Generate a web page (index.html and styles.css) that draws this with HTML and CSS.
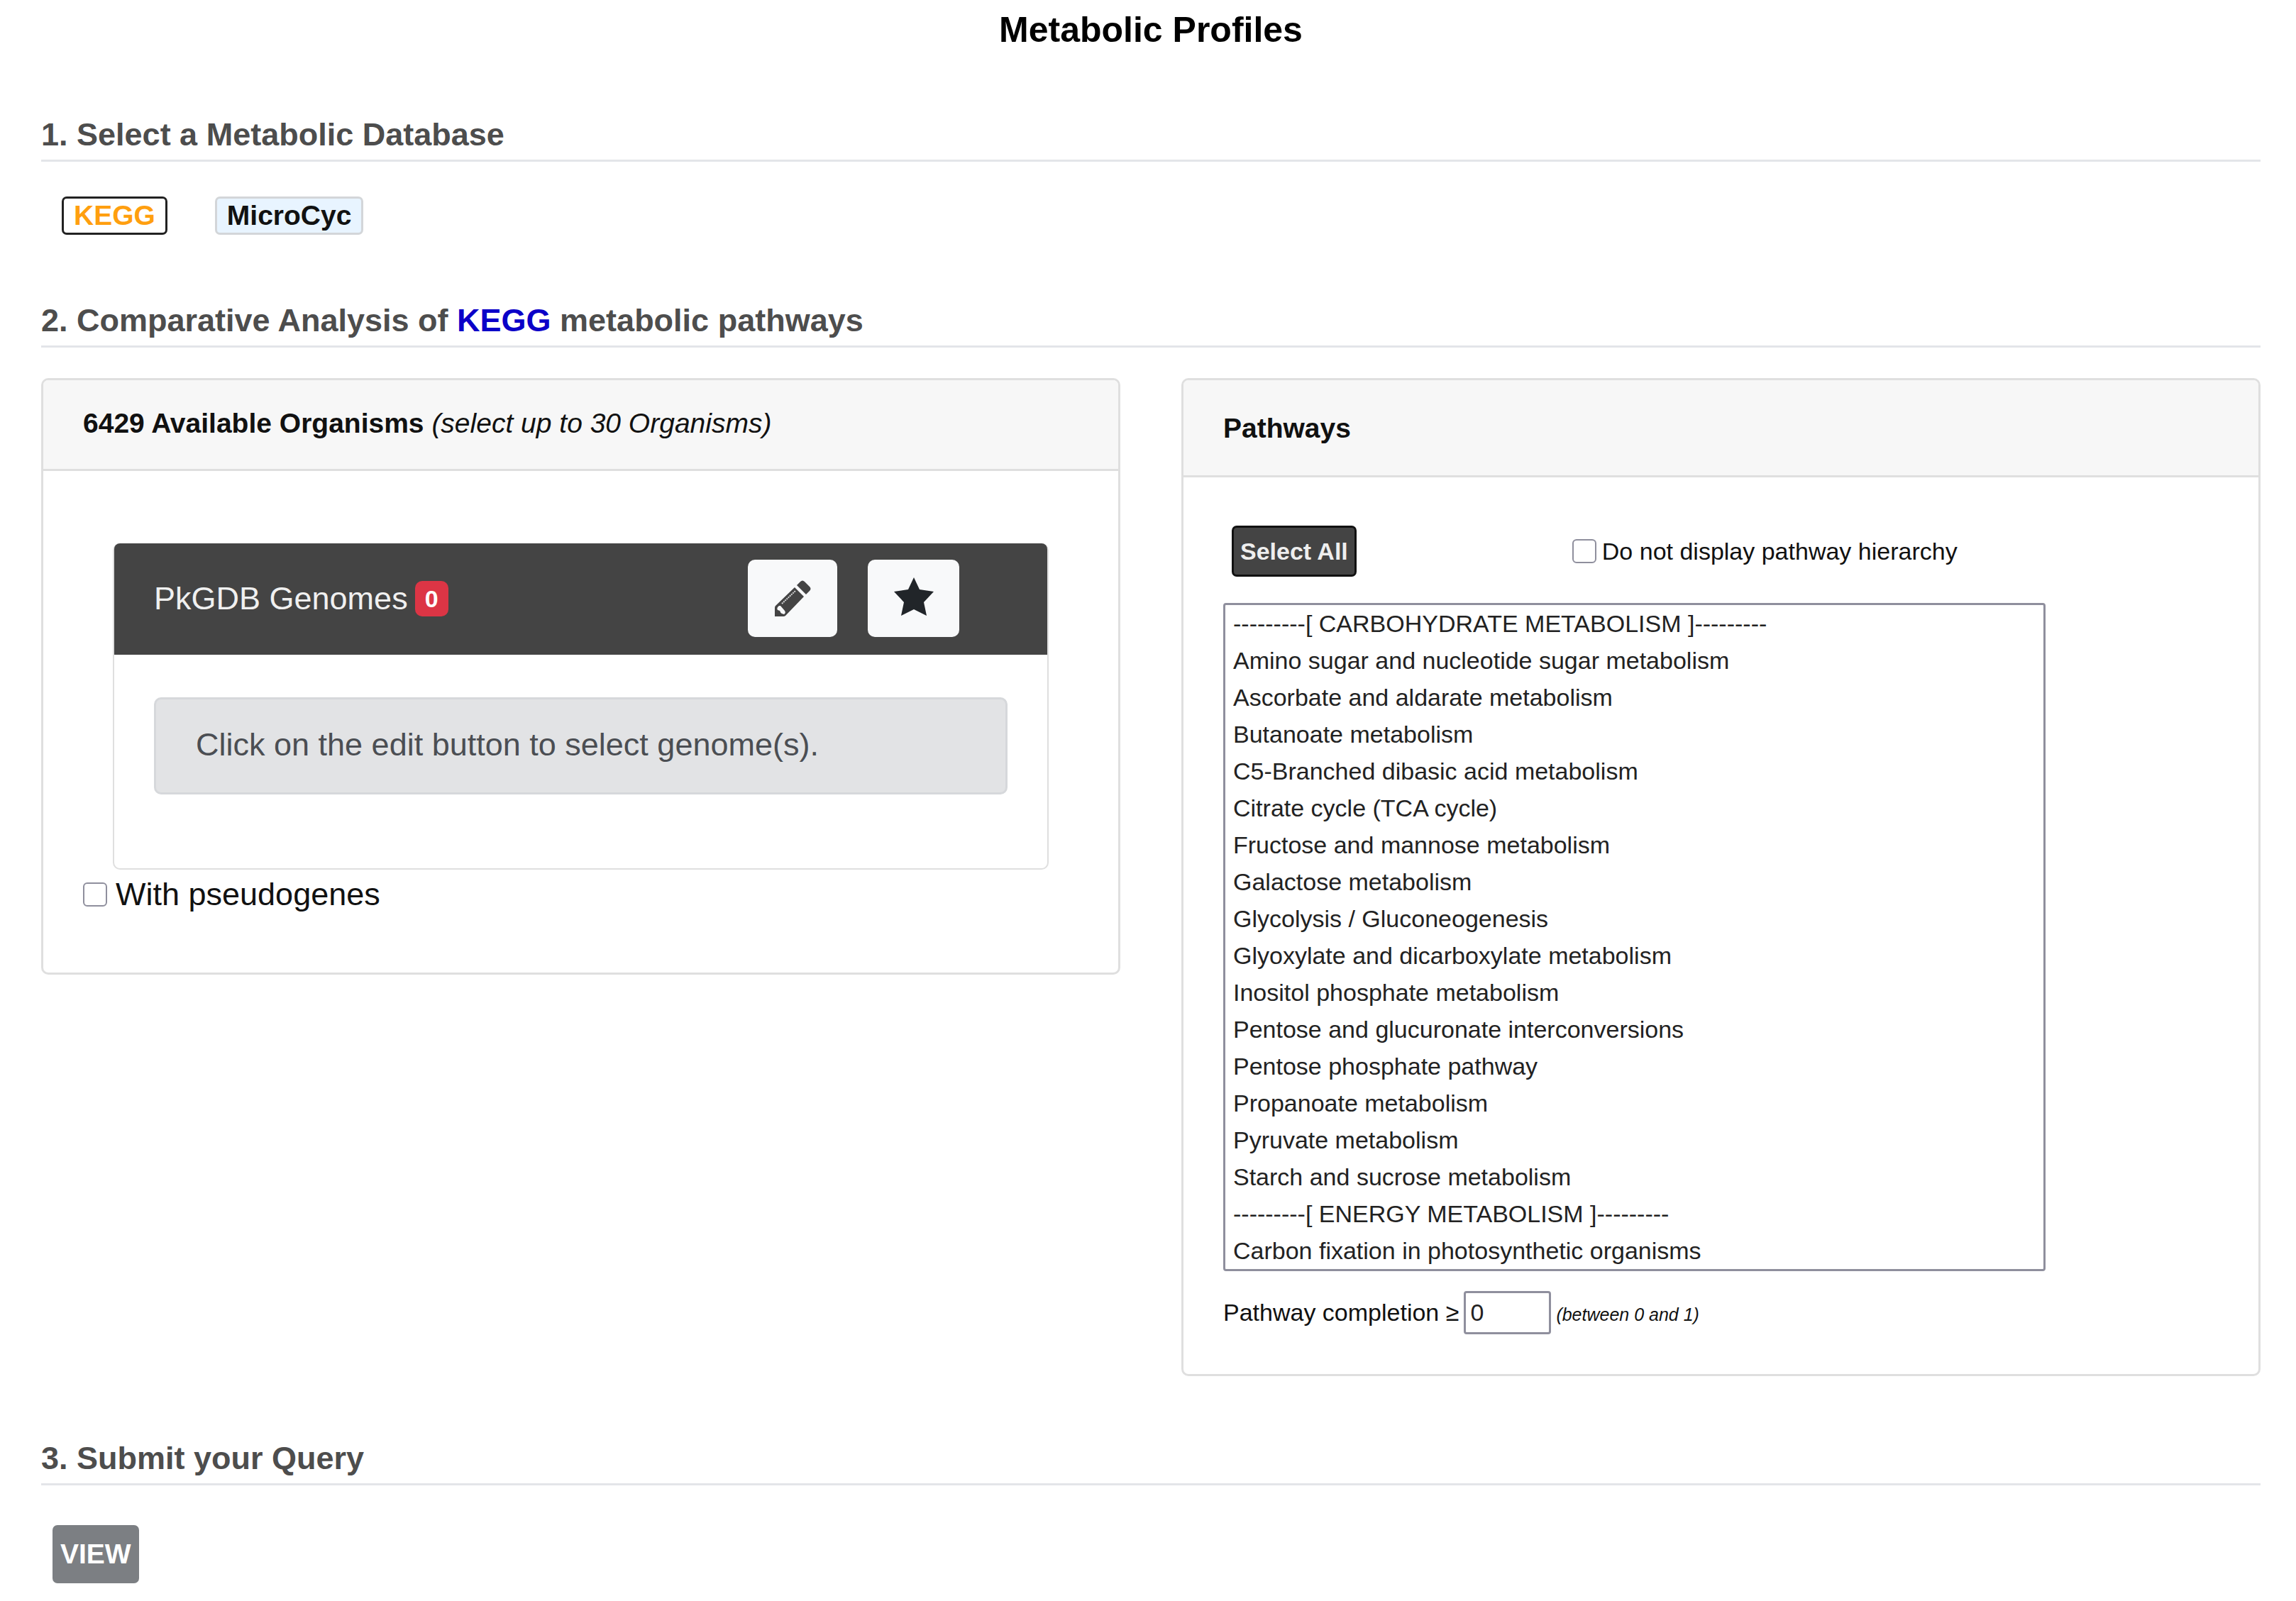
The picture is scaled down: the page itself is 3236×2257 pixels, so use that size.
FILE: index.html
```html
<!DOCTYPE html>
<html lang="en">
<head>
<meta charset="utf-8">
<title>Metabolic Profiles</title>
<link rel="stylesheet" href="styles.css">
</head>
<body>
<main class="page">
  <h1 class="page-title">Metabolic Profiles</h1>

  <section class="step">
    <h2 class="step-title">1. Select a Metabolic Database</h2>
    <div class="db-list">
      <button type="button" class="db-button db-button-active">KEGG</button>
      <button type="button" class="db-button">MicroCyc</button>
    </div>
  </section>

  <section class="step">
    <h2 class="step-title">2. Comparative Analysis of <span class="db-name">KEGG</span> metabolic pathways</h2>
    <div class="columns">
      <section class="card">
        <header class="card-header"><b>6429 Available Organisms</b> <i>(select up to 30 Organisms)</i></header>
        <div class="card-body organisms">
          <section class="genomes">
            <header class="genomes-header">
              <span class="genomes-title">PkGDB Genomes</span>
              <span class="badge">0</span>
              <div class="genomes-tools">
                <button type="button" class="tool tool-edit" aria-label="Edit">
                  <svg viewBox="0 0 52 52" width="52" height="52" aria-hidden="true">
                    <path fill="#444" d="M32 7 L37 2 Q40 -1 43 2 L50 9 Q53 12 50 15 L45 20 Z"/>
                    <path fill="#444" fill-rule="evenodd" d="M29 10 L42 23 L16 50 Q15 51 13 51 H1 V39 Q1 37 2 36 Z M7 36 Q3 39 5 42 L8 43 Q9 46 11 47 L14 48 Q17 46 15 43 L9 36 Z"/>
                    <path stroke="#d4d5d6" stroke-width="2" stroke-dasharray="2 1" fill="none" d="M11 33 L30 15"/>
                  </svg>
                </button>
                <button type="button" class="tool tool-star" aria-label="Favourites">
                  <svg viewBox="0 0 56 54" width="56" height="54" aria-hidden="true">
                    <path fill="#212529" d="M28 0 L36 17 L56 20 L42 35 L46 54 L28 45 L10 54 L14 35 L0 20 L20 17 Z"/>
                  </svg>
                </button>
              </div>
            </header>
            <div class="genomes-body">
              <p class="notice">Click on the edit button to select genome(s).</p>
            </div>
          </section>
          <label class="check"><input type="checkbox" class="checkbox">With pseudogenes</label>
        </div>
      </section>

      <section class="card">
        <header class="card-header card-header-tall"><b>Pathways</b></header>
        <div class="card-body pathways">
          <div class="pathway-tools">
            <button type="button" class="select-all">Select All</button>
            <label class="check check-small"><input type="checkbox" class="checkbox">Do not display pathway hierarchy</label>
          </div>
          <select class="pathway-list" multiple size="18" aria-label="Pathways">
            <option>---------[ CARBOHYDRATE METABOLISM ]---------</option>
            <option>Amino sugar and nucleotide sugar metabolism</option>
            <option>Ascorbate and aldarate metabolism</option>
            <option>Butanoate metabolism</option>
            <option>C5-Branched dibasic acid metabolism</option>
            <option>Citrate cycle (TCA cycle)</option>
            <option>Fructose and mannose metabolism</option>
            <option>Galactose metabolism</option>
            <option>Glycolysis / Gluconeogenesis</option>
            <option>Glyoxylate and dicarboxylate metabolism</option>
            <option>Inositol phosphate metabolism</option>
            <option>Pentose and glucuronate interconversions</option>
            <option>Pentose phosphate pathway</option>
            <option>Propanoate metabolism</option>
            <option>Pyruvate metabolism</option>
            <option>Starch and sucrose metabolism</option>
            <option>---------[ ENERGY METABOLISM ]---------</option>
            <option>Carbon fixation in photosynthetic organisms</option>
          </select>
          <div class="completion">
            <label for="completion">Pathway completion ≥</label>
            <input id="completion" class="completion-input" type="text" value="0">
            <i class="hint">(between 0 and 1)</i>
          </div>
        </div>
      </section>
    </div>
  </section>

  <section class="step">
    <h2 class="step-title">3. Submit your Query</h2>
    <button type="submit" class="view-button">VIEW</button>
  </section>
</main>
</body>
</html>
```
FILE: styles.css
```css
* {
  box-sizing: border-box;
}

body {
  margin: 0;
  background: #fff;
  color: #111;
  font: 45px/56px "Liberation Sans", Arial, sans-serif;
}

button,
input,
select {
  margin: 0;
  font-family: inherit;
}

.page {
  padding: 14px 50px 24px 58px;
}

.page-title {
  margin: 0 0 92px;
  color: #000;
  font-size: 50px;
  line-height: 56px;
  text-align: center;
}

.step-title {
  margin: 0;
  padding-bottom: 7px;
  border-bottom: 3px solid #e3e5e9;
  color: #4d4d4d;
  font-size: 45px;
  line-height: 56px;
}

.db-name {
  color: #0b00c8;
}

.db-list {
  display: flex;
  gap: 67px;
  padding: 49px 29px 93px;
}

.db-button {
  height: 54px;
  padding: 0 14px;
  border: 3px solid #d3d6d9;
  border-radius: 7px;
  background: #e8f4ff;
  color: #111;
  font-size: 39px;
  font-weight: bold;
  line-height: 48px;
}

.db-button-active {
  border-color: #222;
  background: #fff;
  color: #ff9f0f;
}

.columns {
  display: grid;
  grid-template-columns: 1fr 1fr;
  align-items: start;
  gap: 86px;
  padding: 43px 0 88px;
}

.card {
  border: 3px solid #dfdfdf;
  border-radius: 10px;
}

.card-header {
  padding: 33px 56px 36px;
  border-bottom: 3px solid #dfdfdf;
  border-radius: 7px 7px 0 0;
  background: #f7f7f7;
  font-size: 39px;
}

.card-header-tall {
  padding: 40px 56px 38px;
}

.card-body {
  padding: 68px 56px 56px;
}

.organisms {
  padding-top: 102px;
  padding-bottom: 82px;
}

.genomes {
  margin: 0 42px 7px;
  border: 2px solid #dfdfdf;
  border-top: 0;
  border-radius: 10px;
}

.genomes-header {
  display: flex;
  align-items: center;
  padding: 23px 124px 25px 56px;
  border-radius: 8px 8px 0 0;
  background: #444;
  color: #f0f0f0;
}

.badge {
  margin-left: 10px;
  padding: 0 14px;
  border-radius: 10px;
  background: #dc3545;
  color: #fff;
  font-size: 34px;
  font-weight: bold;
  line-height: 50px;
}

.genomes-tools {
  display: flex;
  gap: 43px;
  margin-left: auto;
}

.tool {
  display: flex;
  align-items: center;
  justify-content: center;
  width: 126px;
  height: 109px;
  padding: 0;
  border: 0;
  border-radius: 10px;
  background: #f8f9fa;
}

.tool-star {
  width: 129px;
  padding-bottom: 6px;
}

.genomes-body {
  padding: 60px 56px 104px;
}

.notice {
  margin: 0;
  padding: 36px 56px 39px;
  border: 3px solid #d6d8db;
  border-radius: 10px;
  background: #e2e3e5;
  color: #4b4e53;
}

.check {
  display: flex;
  align-items: center;
  gap: 12px;
}

.check-small {
  gap: 8px;
}

.checkbox {
  appearance: none;
  width: 34px;
  height: 34px;
  border: 2px solid #8f8f9d;
  border-radius: 6px;
  background: #fff;
}

.pathway-tools,
.pathway-list,
.completion {
  font-size: 34px;
}

.pathway-tools {
  display: flex;
  gap: 304px;
  padding-left: 12px;
}

.select-all {
  height: 72px;
  padding: 0 9px;
  border: 3px solid #111;
  border-radius: 7px;
  background: #444;
  color: #eee;
  font-size: 34px;
  font-weight: bold;
}

.pathway-list {
  display: block;
  width: 1159px;
  max-width: 100%;
  height: auto;
  margin: 37px 0 28px;
  padding: 0;
  overflow: hidden;
  border: 3px solid #8f8f9d;
  border-radius: 4px;
  background: #fff;
  color: #222;
}

.pathway-list option {
  height: 52px;
  min-height: 0;
  padding: 7px 11px 6px;
}

.completion {
  display: flex;
  align-items: baseline;
  gap: 7px;
}

.completion-input {
  width: 123px;
  height: 61px;
  padding: 0 6px;
  border: 3px solid #8f8f9d;
  border-radius: 4px;
  color: #222;
  font-size: 34px;
}

.hint {
  font-size: 25px;
}

.view-button {
  display: block;
  height: 82px;
  margin: 56px 0 0 16px;
  padding: 0 11px;
  border: 0;
  border-radius: 7px;
  background: #7c7f83;
  color: #fff;
  font-size: 39px;
  font-weight: bold;
}
```
